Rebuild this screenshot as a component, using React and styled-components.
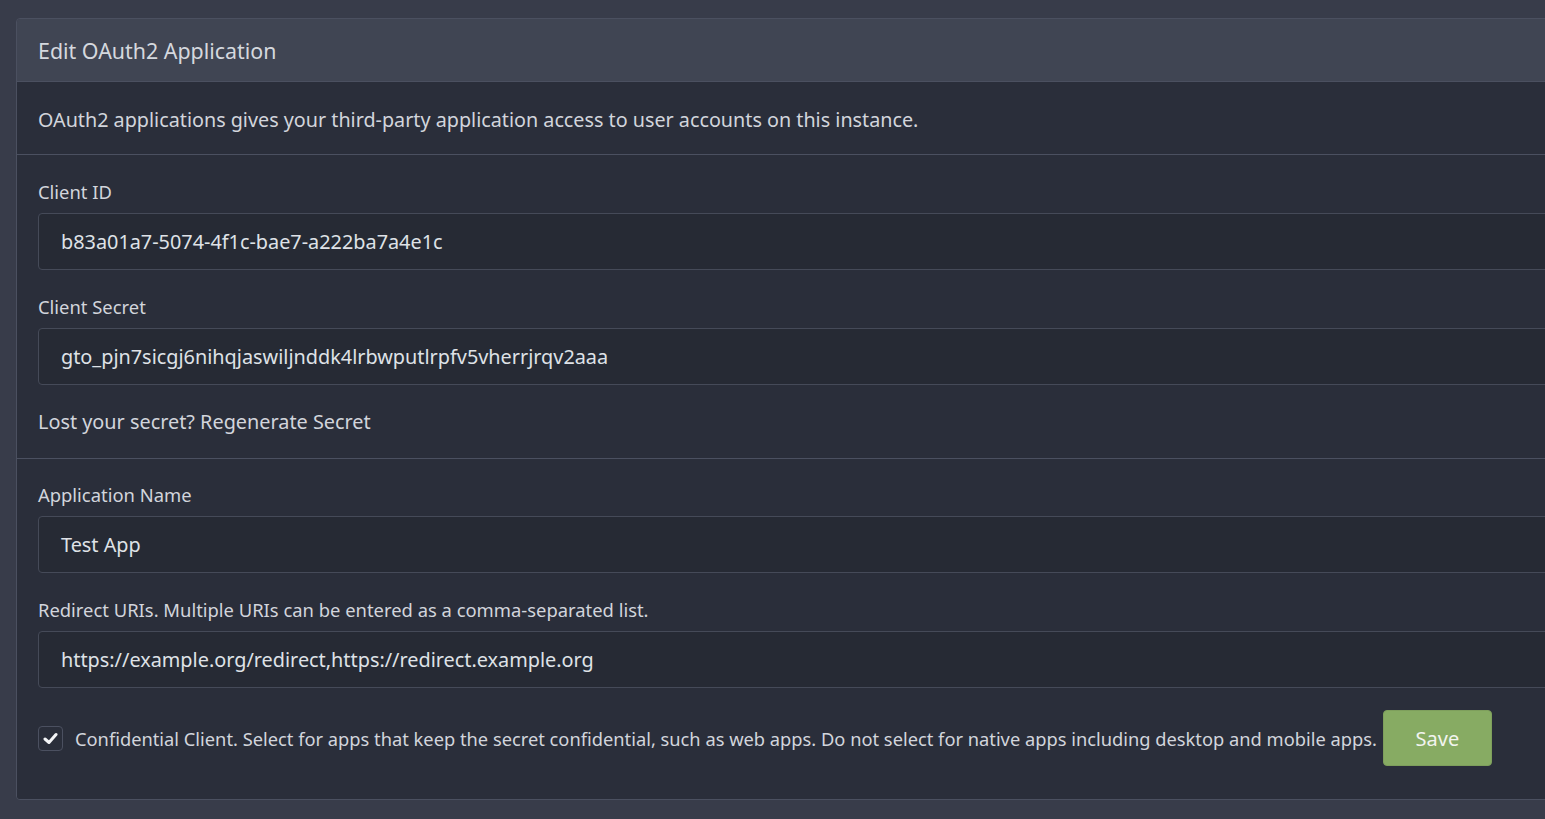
import React from 'react';
import styled, { createGlobalStyle } from 'styled-components';

const Global = createGlobalStyle`
  html, body {
    margin: 0;
    padding: 0;
    background: #383c4a;
    overflow: hidden;
  }
  body {
    font-family: "Noto Sans", "DejaVu Sans", sans-serif;
    color: #d2d5dc;
  }
`

const Page = styled.div`
  padding: 18px 0 0 16px;
  width: 1600px;
  height: 819px;
  box-sizing: border-box;
`

const Card = styled.div`
  border: 1px solid #4b5060;
  border-radius: 4px;
  overflow: hidden;
`

const Header = styled.div`
  background: #404553;
  padding: 0 21px;
  height: 62px;
  display: flex;
  align-items: center;
  font-size: 21.4px;
  color: #d5d8de;
  border-bottom: 1px solid #4b5060;
`

const Section = styled.div`
  background: #2a2e3a;
  padding: ${p => p.$pad || '25px 21px 21px'};
  border-bottom: ${p => (p.$last ? 'none' : '1px solid #4b5060')};
`

const Desc = styled.div`
  font-size: 19.75px;
  line-height: 30px;
`

const Field = styled.div`
  display: flex;
  flex-direction: column;
  gap: 9px;
  margin-bottom: ${p => p.$mb || '25px'};
`

const Label = styled.label`
  font-size: 18.4px;
  line-height: 24px;
`

const Input = styled.div`
  height: 57px;
  box-sizing: border-box;
  background: #262a34;
  border: 1px solid #454a58;
  border-radius: 4px;
  display: flex;
  align-items: center;
  padding: 0 22px;
  font-size: 19.85px;
  color: #dfe2e7;
`

const Note = styled.div`
  font-size: 19.85px;
  line-height: 30px;
`

const CheckRow = styled.div`
  display: flex;
  align-items: center;
  gap: 12px;
  margin-top: 22px;
  padding-bottom: 12px;
`

const Box = styled.span`
  width: 23px;
  height: 23px;
  border: 1px solid #4b5060;
  border-radius: 4px;
  background: #2a2e3a;
  display: flex;
  align-items: center;
  justify-content: center;
  flex-shrink: 0;
`

const CheckText = styled.span`
  font-size: 18.3px;
`

const SaveButton = styled.button`
  margin-left: -6px;
  width: 109px;
  height: 56px;
  border: 1px solid #7e9f5c;
  border-radius: 4px;
  background: #87ab63;
  color: #f2f4ef;
  font-family: inherit;
  font-size: 20px;
  cursor: pointer;
`

export default function App() {
  return (
    <>
      <Global />
      <Page>
        <Card>
          <Header>Edit OAuth2 Application</Header>
          <Section $pad="23px 21px 19px">
            <Desc>OAuth2 applications gives your third-party application access to user accounts on this instance.</Desc>
          </Section>
          <Section>
            <Field>
              <Label>Client ID</Label>
              <Input>b83a01a7-5074-4f1c-bae7-a222ba7a4e1c</Input>
            </Field>
            <Field $mb="22px">
              <Label>Client Secret</Label>
              <Input>gto_pjn7sicgj6nihqjaswiljnddk4lrbwputlrpfv5vherrjrqv2aaa</Input>
            </Field>
            <Note>Lost your secret? Regenerate Secret</Note>
          </Section>
          <Section $last $pad="24px 21px 21px">
            <Field>
              <Label>Application Name</Label>
              <Input>Test App</Input>
            </Field>
            <Field $mb="0">
              <Label>Redirect URIs. Multiple URIs can be entered as a comma-separated list.</Label>
              <Input>https://example.org/redirect,https://redirect.example.org</Input>
            </Field>
            <CheckRow>
              <Box>
                <svg width="15" height="13" viewBox="0 0 15 13">
                  <path d="M2 7 L6 10.5 L13 2.5" fill="none" stroke="#f4f5f7" strokeWidth="3" strokeLinecap="round" strokeLinejoin="round" />
                </svg>
              </Box>
              <CheckText>Confidential Client. Select for apps that keep the secret confidential, such as web apps. Do not select for native apps including desktop and mobile apps.</CheckText>
              <SaveButton>Save</SaveButton>
            </CheckRow>
          </Section>
        </Card>
      </Page>
    </>
  );
}
